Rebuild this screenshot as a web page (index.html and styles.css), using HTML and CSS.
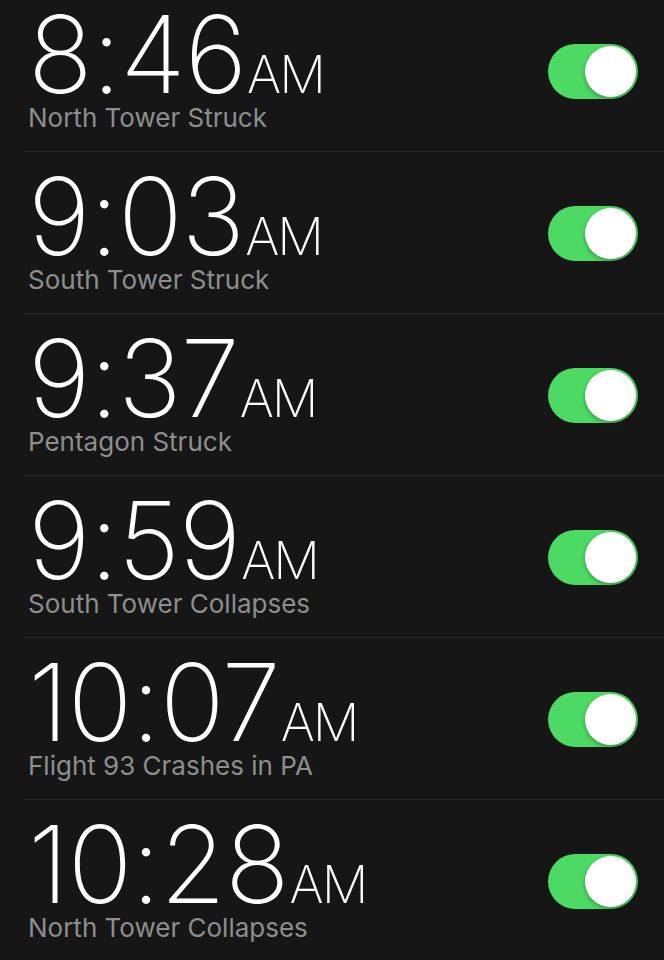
FILE: index.html
```html
<!DOCTYPE html>
<html lang="en">

<head>
  <meta charset="UTF-8" />
  <meta name="viewport" content="width=device-width, initial-scale=1.0" />
  <title>Alarms</title>
  <link rel="stylesheet" href="styles.css">
</head>

<body>

  <!-- Alarm list -->
  <ul class="alarms">
    <li class="alarm">
      <div class="alarm-info">
        <div class="time">8:46<span class="ampm">AM</span></div>
        <div class="label">North Tower Struck</div>
      </div>
      <span class="toggle on"><span class="knob"></span></span>
    </li>
    <li class="alarm">
      <div class="alarm-info">
        <div class="time">9:03<span class="ampm">AM</span></div>
        <div class="label">South Tower Struck</div>
      </div>
      <span class="toggle on"><span class="knob"></span></span>
    </li>
    <li class="alarm">
      <div class="alarm-info">
        <div class="time">9:37<span class="ampm">AM</span></div>
        <div class="label">Pentagon Struck</div>
      </div>
      <span class="toggle on"><span class="knob"></span></span>
    </li>
    <li class="alarm">
      <div class="alarm-info">
        <div class="time">9:59<span class="ampm">AM</span></div>
        <div class="label">South Tower Collapses</div>
      </div>
      <span class="toggle on"><span class="knob"></span></span>
    </li>
    <li class="alarm">
      <div class="alarm-info">
        <div class="time">10:07<span class="ampm">AM</span></div>
        <div class="label">Flight 93 Crashes in PA</div>
      </div>
      <span class="toggle on"><span class="knob"></span></span>
    </li>
    <li class="alarm">
      <div class="alarm-info">
        <div class="time">10:28<span class="ampm">AM</span></div>
        <div class="label">North Tower Collapses</div>
      </div>
      <span class="toggle on"><span class="knob"></span></span>
    </li>
  </ul>

</body>

</html>
```

FILE: styles.css
```css
body {
  margin: 0;
  padding: 0;
  background-color: #161616;
  font-family: "Inter", "Liberation Sans", sans-serif;
  color: #fff;
  overflow: hidden;
}

.alarms {
  list-style: none;
  margin: -10px 0 0 0;
  padding: 0;
}

.alarm {
  margin-left: 24px;
  padding: 24px 26px 17px 4px;
  border-bottom: 1px solid #2a2a2a;
  display: flex;
  align-items: center;
  justify-content: space-between;
}

.alarm:last-child {
  border-bottom: none;
}

.time {
  height: 80px;
  font-size: 107px;
  font-weight: 200;
  line-height: 80px;
  letter-spacing: -1px;
}

.ampm {
  font-size: 52px;
  font-weight: 200;
  line-height: 40px;
  letter-spacing: -2px;
  margin-left: 1px;
}

.label {
  font-size: 26px;
  line-height: 32px;
  color: #8e8e8e;
  margin-top: 8px;
}

/* iOS style switch */
.toggle {
  width: 90px;
  height: 55px;
  border-radius: 28px;
  background-color: #4cd964;
  position: relative;
  flex-shrink: 0;
  margin-bottom: 6px;
}

.knob {
  position: absolute;
  top: 2px;
  right: 2px;
  width: 51px;
  height: 51px;
  border-radius: 50%;
  background-color: #fff;
  box-shadow: 0 2px 4px rgba(0, 0, 0, 0.3);
}
```
